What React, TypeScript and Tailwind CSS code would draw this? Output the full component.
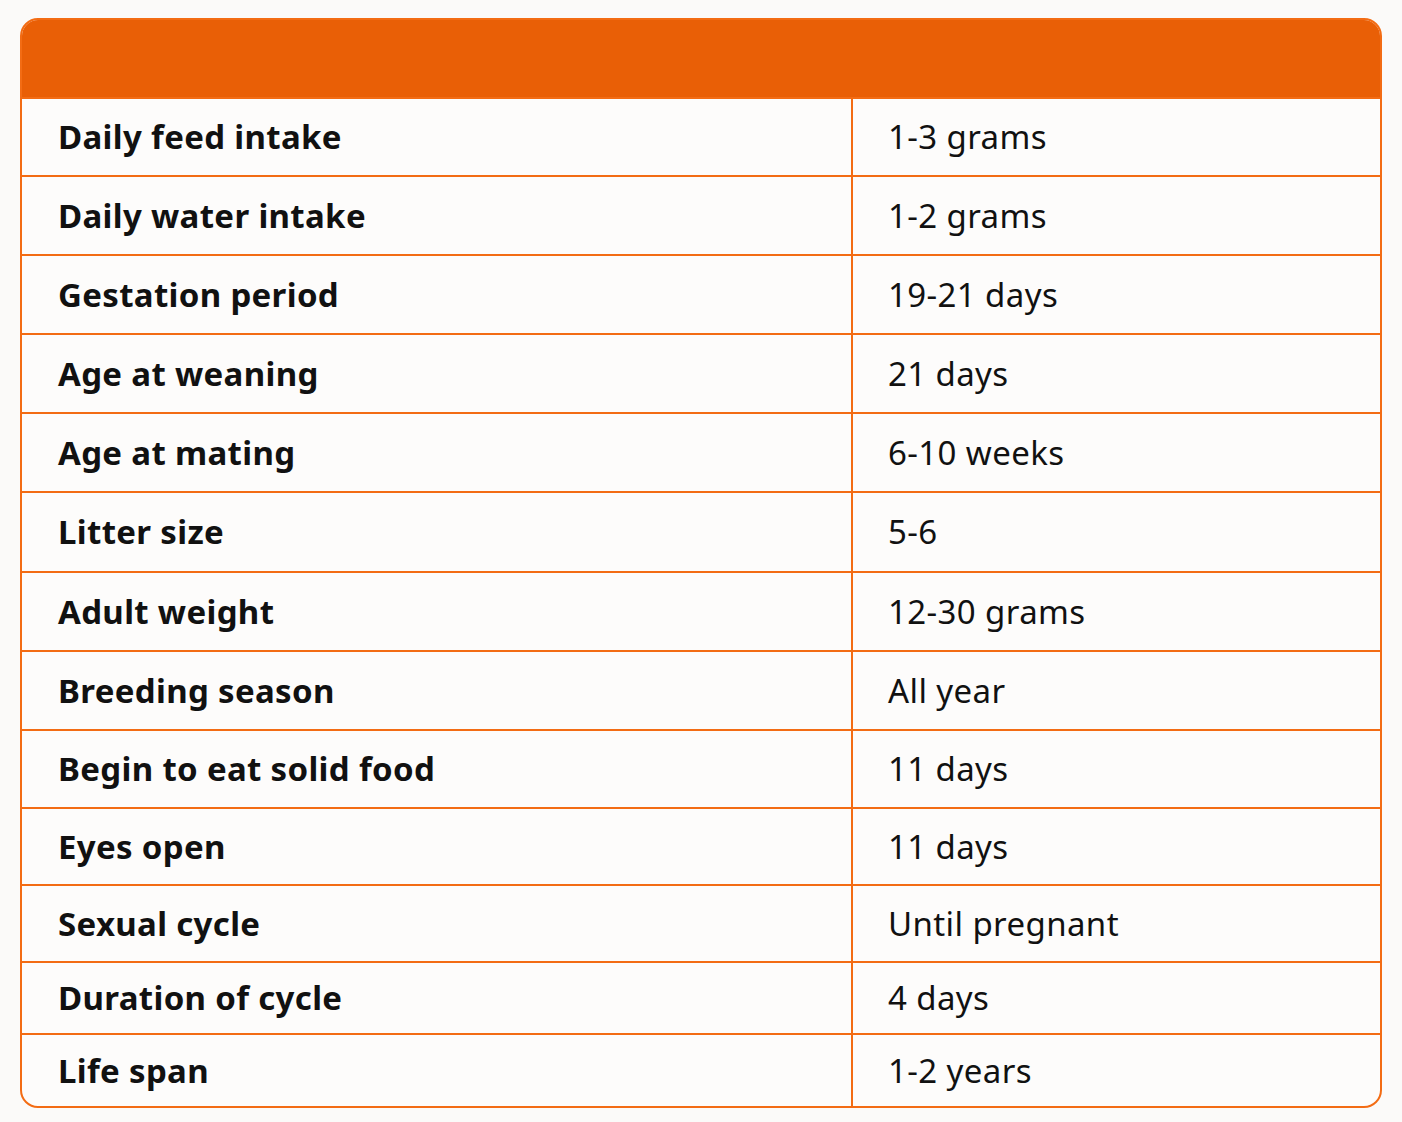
const ROWS: { label: string; value: string; h: string }[] = [
  { label: 'Daily feed intake', value: '1-3 grams', h: 'h-[78px]' },
  { label: 'Daily water intake', value: '1-2 grams', h: 'h-[79px]' },
  { label: 'Gestation period', value: '19-21 days', h: 'h-[79px]' },
  { label: 'Age at weaning', value: '21 days', h: 'h-[79px]' },
  { label: 'Age at mating', value: '6-10 weeks', h: 'h-[79px]' },
  { label: 'Litter size', value: '5-6', h: 'h-[80px]' },
  { label: 'Adult weight', value: '12-30 grams', h: 'h-[79px]' },
  { label: 'Breeding season', value: 'All year', h: 'h-[79px]' },
  { label: 'Begin to eat solid food', value: '11 days', h: 'h-[78px]' },
  { label: 'Eyes open', value: '11 days', h: 'h-[77px]' },
  { label: 'Sexual cycle', value: 'Until pregnant', h: 'h-[77px]' },
  { label: 'Duration of cycle', value: '4 days', h: 'h-[72px]' },
  { label: 'Life span', value: '1-2 years', h: 'h-[73px]' },
];

export default function App() {
  return (
    <div className="min-h-[1122px] bg-[#fbfaf9] px-[20px] pt-[18px] font-['Noto_Sans',sans-serif] text-[#111111]">
      <div className="w-[1362px] overflow-hidden rounded-[18px] border-2 border-[#f36c14] bg-[#fdfcfb]">
        <div className="h-[77px] bg-[#e95f06]" />
        {ROWS.map((row) => (
          <div key={row.label} className={`flex border-t-2 border-[#f36c14] ${row.h}`}>
            <div className="flex w-[831px] items-center border-r-2 border-[#f36c14] pl-[36px] text-[33px] font-bold tracking-[0.01em]">
              {row.label}
            </div>
            <div className="flex flex-1 items-center pl-[35px] text-[33px] tracking-[0.012em]">{row.value}</div>
          </div>
        ))}
      </div>
    </div>
  );
}
